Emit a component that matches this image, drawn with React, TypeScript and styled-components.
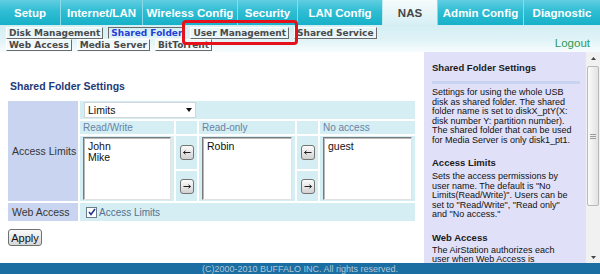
import React from 'react';
import styled, { createGlobalStyle } from 'styled-components';

const GlobalStyle = createGlobalStyle`
  html, body {
    margin: 0;
    padding: 0;
    overflow: hidden;
    background: #fff;
  }
  body {
    font-family: "Liberation Sans", Arial, sans-serif;
  }
`;

//Parent Div
const Page = styled.div`
  position: relative;
  width: 600px;
  height: 274px;
  overflow: hidden;
  display: flex;
  flex-direction: column;
`;

//Top tabs
const TopNav = styled.div`
  display: flex;
  height: 25px;
  flex-shrink: 0;
  background: linear-gradient(#62cee1, #2fbdd3 45%, #17b1c9);
`;

const NavTab = styled.div<{ $w: number; $active?: boolean }>`
  width: ${p => p.$w}px;
  box-sizing: border-box;
  border-left: 1px solid ${p => (p.$active ? '#bfe8ef' : '#8adbe7')};
  display: flex;
  align-items: center;
  justify-content: center;
  font-size: 11.5px;
  font-weight: bold;
  color: ${p => (p.$active ? '#454545' : '#fff')};
  background: ${p => (p.$active ? 'linear-gradient(#f6fbfc, #d6eff4)' : 'transparent')};
  &:first-child {
    border-left: none;
  }
`;

//Sub tabs
const SubNav = styled.div`
  height: 27px;
  flex-shrink: 0;
  box-sizing: border-box;
  display: flex;
  justify-content: space-between;
  padding: 2px 10px 0 6px;
  background: linear-gradient(#d3eef3, #e0f3f7 55%, #f7fcfd);
`;

const SubTabs = styled.div`
  width: 385px;
  display: flex;
  flex-wrap: wrap;
  align-content: flex-start;
  column-gap: 5px;
`;

const SubTab = styled.div<{ $active?: boolean }>`
  height: 12px;
  box-sizing: border-box;
  line-height: 10px;
  padding: 0 2px;
  font-family: "DejaVu Sans", Verdana, sans-serif;
  font-size: 9px;
  font-weight: bold;
  white-space: nowrap;
  color: ${p => (p.$active ? '#1f3fd8' : '#4a4a4a')};
  border: 1px solid;
  border-color: ${p => (p.$active ? '#6a6a6a #f4fbfc #f4fbfc #6a6a6a' : '#fff #6a6a6a #6a6a6a #fff')};
  background: ${p => (p.$active ? 'transparent' : 'rgba(255, 255, 255, 0.4)')};
`;

const Logout = styled.div`
  align-self: flex-end;
  padding-bottom: 2px;
  font-size: 11.5px;
  line-height: 13px;
  color: #2a9b58;
`;

//Main
const Main = styled.div`
  display: flex;
  height: 211px;
  flex-shrink: 0;
`;

const Content = styled.div`
  width: 424px;
  box-sizing: border-box;
  padding: 28px 0 0 8px;
`;

const Title = styled.h2`
  margin: 0 0 8px 2px;
  font-size: 10.5px;
  line-height: 13px;
  font-weight: bold;
  color: #1e3a78;
`;

const Grid = styled.div`
  width: 407px;
  display: grid;
  grid-template-columns: 70px 94px 21px 96px 21px 95px;
  grid-template-rows: 18px 13px 33px 30px 18px;
  gap: 2px;
`;

const Cell = styled.div<{ $col: string; $row: string }>`
  grid-column: ${p => p.$col};
  grid-row: ${p => p.$row};
  box-sizing: border-box;
  background: #d4eef4;
`;

const LabelCell = styled(Cell)`
  background: #c8d4f0;
  display: flex;
  align-items: center;
  padding-left: 4px;
  font-size: 10.5px;
  color: #363636;
`;

const SelectCell = styled(Cell)`
  padding: 1px 0 0 4px;
`;

const Select = styled.div`
  width: 112px;
  height: 16px;
  box-sizing: border-box;
  background: #fff;
  border: 1px solid #cfd6da;
  display: flex;
  align-items: center;
  justify-content: space-between;
  padding: 0 3px 0 3px;
  font-size: 10.5px;
  color: #111;
`;

const HeaderCell = styled(Cell)`
  padding-left: 3px;
  font-size: 10px;
  line-height: 13px;
  color: #6883a3;
`;

const ListCell = styled(Cell)`
  padding: 1px 3px 1px 3px;
`;

const ListBox = styled.div`
  height: 100%;
  box-sizing: border-box;
  background: #fff;
  border: 1px solid;
  border-color: #7a7a7a #e2e2e2 #e2e2e2 #7a7a7a;
  box-shadow: inset 1px 1px 0 #b8b8b8;
  padding: 3px 4px;
  font-size: 10.5px;
  line-height: 11px;
  color: #111;
`;

const ArrowCell = styled(Cell)`
  display: flex;
  align-items: center;
  justify-content: center;
  padding-left: 1px;
`;

const ArrowBtn = styled.div`
  width: 14px;
  height: 15px;
  box-sizing: border-box;
  border: 1px solid #747474;
  border-radius: 3px;
  background: linear-gradient(#fbfbfb, #d2d2d2);
  display: flex;
  align-items: center;
  justify-content: center;
`;

const CheckCell = styled(Cell)`
  display: flex;
  align-items: center;
  padding-left: 6px;
`;

const CheckBox = styled.div`
  width: 11px;
  height: 11px;
  box-sizing: border-box;
  border: 1px solid #6c7c8c;
  background: #fff;
  display: flex;
  align-items: center;
  justify-content: center;
`;

const CheckLabel = styled.span`
  margin-left: 2px;
  font-size: 10px;
  color: #56708f;
`;

const ApplyButton = styled.div`
  margin-top: 8px;
  width: 34px;
  height: 17px;
  box-sizing: border-box;
  border: 1px solid #707070;
  border-radius: 3px;
  background: linear-gradient(#fafafa, #d6d6d6);
  display: flex;
  align-items: center;
  justify-content: center;
  font-size: 11px;
  color: #111;
`;

//Help panel
const Help = styled.div`
  flex: 1;
  background: #e0e0f8;
  padding: 10px 5px 0 8px;
  overflow: hidden;
`;

const HelpHeading = styled.div<{ $mt?: number }>`
  margin-top: ${p => p.$mt || 0}px;
  font-size: 9.5px;
  line-height: 12px;
  font-weight: bold;
  color: #1a1a1a;
  white-space: nowrap;
`;

const Divider = styled.div`
  height: 3px;
  background: #c8d3f0;
  margin: 7px 0 4px;
`;

const HelpText = styled.p<{ $mt?: number }>`
  margin: ${p => p.$mt || 0}px 0 0;
  font-size: 9px;
  line-height: 9.5px;
  color: #111;
  white-space: nowrap;
`;

const Scrollbar = styled.div`
  width: 15px;
  box-sizing: border-box;
  background: #f1f1f1;
  border-left: 1px solid #e4e4e4;
  display: flex;
  flex-direction: column;
  align-items: center;
`;

const ScrollArrow = styled.div<{ $h: number }>`
  height: ${p => p.$h}px;
  display: flex;
  align-items: center;
  justify-content: center;
`;

const Thumb = styled.div`
  width: 12px;
  height: 140px;
  margin-top: 1px;
  box-sizing: border-box;
  border: 1px solid #b9b9b9;
  border-radius: 2px;
  background: linear-gradient(90deg, #fbfbfb, #e2e2e2);
  display: flex;
  flex-direction: column;
  align-items: center;
  justify-content: center;
  gap: 1px;
`;

const Grip = styled.div`
  width: 6px;
  height: 1px;
  background: #9a9a9a;
`;

const Spacer = styled.div`
  flex: 1;
`;

const Footer = styled.div`
  height: 20px;
  flex-shrink: 0;
  background: #1a6ea2;
  padding-top: 1px;
  box-sizing: border-box;
  text-align: center;
  font-size: 9px;
  line-height: 10px;
  color: #b1c6d8;
`;

//Annotation
const Highlight = styled.div`
  position: absolute;
  left: 182px;
  top: 20px;
  width: 116px;
  height: 25px;
  box-sizing: border-box;
  border: 3px solid #e5121b;
  border-radius: 4px;
`;

const tabs: [string, number][] = [
  ['Setup', 60],
  ['Internet/LAN', 82],
  ['Wireless Config', 95],
  ['Security', 60],
  ['LAN Config', 85],
  ['NAS', 55],
  ['Admin Config', 86],
  ['Diagnostic', 77],
];

const subTabs = [
  'Disk Management',
  'Shared Folder',
  'User Management',
  'Shared Service',
  'Web Access',
  'Media Server',
  'BitTorrent',
];

const LeftArrow = () => (
  <svg width="8" height="5" viewBox="0 0 8 5">
    <path d="M0.5 2.5 H7.5 M0.5 2.5 L2.5 0.8 M0.5 2.5 L2.5 4.2" stroke="#222" strokeWidth="1" fill="none" />
  </svg>
);

const RightArrow = () => (
  <svg width="8" height="5" viewBox="0 0 8 5">
    <path d="M0.5 2.5 H7.5 M7.5 2.5 L5.5 0.8 M7.5 2.5 L5.5 4.2" stroke="#222" strokeWidth="1" fill="none" />
  </svg>
);

const App = () => {
  return (
    <>
      <GlobalStyle />
      <Page>
        <TopNav>
          {tabs.map(([name, w]) => (
            <NavTab key={name} $w={w} $active={name === 'NAS'}>
              {name}
            </NavTab>
          ))}
        </TopNav>
        <SubNav>
          <SubTabs>
            {subTabs.map(name => (
              <SubTab key={name} $active={name === 'Shared Folder'}>
                {name}
              </SubTab>
            ))}
          </SubTabs>
          <Logout>Logout</Logout>
        </SubNav>
        <Main>
          <Content>
            <Title>Shared Folder Settings</Title>
            <Grid>
              <LabelCell $col="1" $row="1 / 5">Access Limits</LabelCell>
              <SelectCell $col="2 / 7" $row="1">
                <Select>
                  <span>Limits</span>
                  <svg width="6" height="4" viewBox="0 0 6 4">
                    <path d="M0 0 H6 L3 4 Z" fill="#111" />
                  </svg>
                </Select>
              </SelectCell>
              <HeaderCell $col="2" $row="2">Read/Write</HeaderCell>
              <HeaderCell $col="3" $row="2" />
              <HeaderCell $col="4" $row="2">Read-only</HeaderCell>
              <HeaderCell $col="5" $row="2" />
              <HeaderCell $col="6" $row="2">No access</HeaderCell>
              <ListCell $col="2" $row="3 / 5">
                <ListBox>
                  John
                  <br />
                  Mike
                </ListBox>
              </ListCell>
              <ArrowCell $col="3" $row="3">
                <ArrowBtn><LeftArrow /></ArrowBtn>
              </ArrowCell>
              <ArrowCell $col="3" $row="4">
                <ArrowBtn><RightArrow /></ArrowBtn>
              </ArrowCell>
              <ListCell $col="4" $row="3 / 5">
                <ListBox>Robin</ListBox>
              </ListCell>
              <ArrowCell $col="5" $row="3">
                <ArrowBtn><LeftArrow /></ArrowBtn>
              </ArrowCell>
              <ArrowCell $col="5" $row="4">
                <ArrowBtn><RightArrow /></ArrowBtn>
              </ArrowCell>
              <ListCell $col="6" $row="3 / 5">
                <ListBox>guest</ListBox>
              </ListCell>
              <LabelCell $col="1" $row="5">Web Access</LabelCell>
              <CheckCell $col="2 / 7" $row="5">
                <CheckBox>
                  <svg width="8" height="8" viewBox="0 0 8 8">
                    <path d="M1 4 L3 6.5 L7 1" stroke="#24358a" strokeWidth="1.6" fill="none" />
                  </svg>
                </CheckBox>
                <CheckLabel>Access Limits</CheckLabel>
              </CheckCell>
            </Grid>
            <ApplyButton>Apply</ApplyButton>
          </Content>
          <Help>
            <HelpHeading>Shared Folder Settings</HelpHeading>
            <Divider />
            <HelpText>
              Settings for using the whole USB<br />
              disk as shared folder. The shared<br />
              folder name is set to diskX_ptY(X:<br />
              disk number Y: partition number).<br />
              The shared folder that can be used<br />
              for Media Server is only disk1_pt1.
            </HelpText>
            <HelpHeading $mt={12}>Access Limits</HelpHeading>
            <HelpText $mt={3}>
              Sets the access permissions by<br />
              user name. The default is "No<br />
              Limits(Read/Write)". Users can be<br />
              set to "Read/Write", "Read only"<br />
              and "No access."
            </HelpText>
            <HelpHeading $mt={12}>Web Access</HelpHeading>
            <HelpText $mt={2}>
              The AirStation authorizes each<br />
              user when Web Access is
            </HelpText>
          </Help>
          <Scrollbar>
            <ScrollArrow $h={13}>
              <svg width="5" height="3" viewBox="0 0 5 3">
                <path d="M0 3 L2.5 0 L5 3 Z" fill="#444" />
              </svg>
            </ScrollArrow>
            <Thumb>
              <Grip />
              <Grip />
              <Grip />
            </Thumb>
            <Spacer />
            <ScrollArrow $h={11}>
              <svg width="5" height="3" viewBox="0 0 5 3">
                <path d="M0 0 L2.5 3 L5 0 Z" fill="#444" />
              </svg>
            </ScrollArrow>
          </Scrollbar>
        </Main>
        <Footer>(C)2000-2010 BUFFALO INC. All rights reserved.</Footer>
        <Highlight />
      </Page>
    </>
  );
};

export default App;
